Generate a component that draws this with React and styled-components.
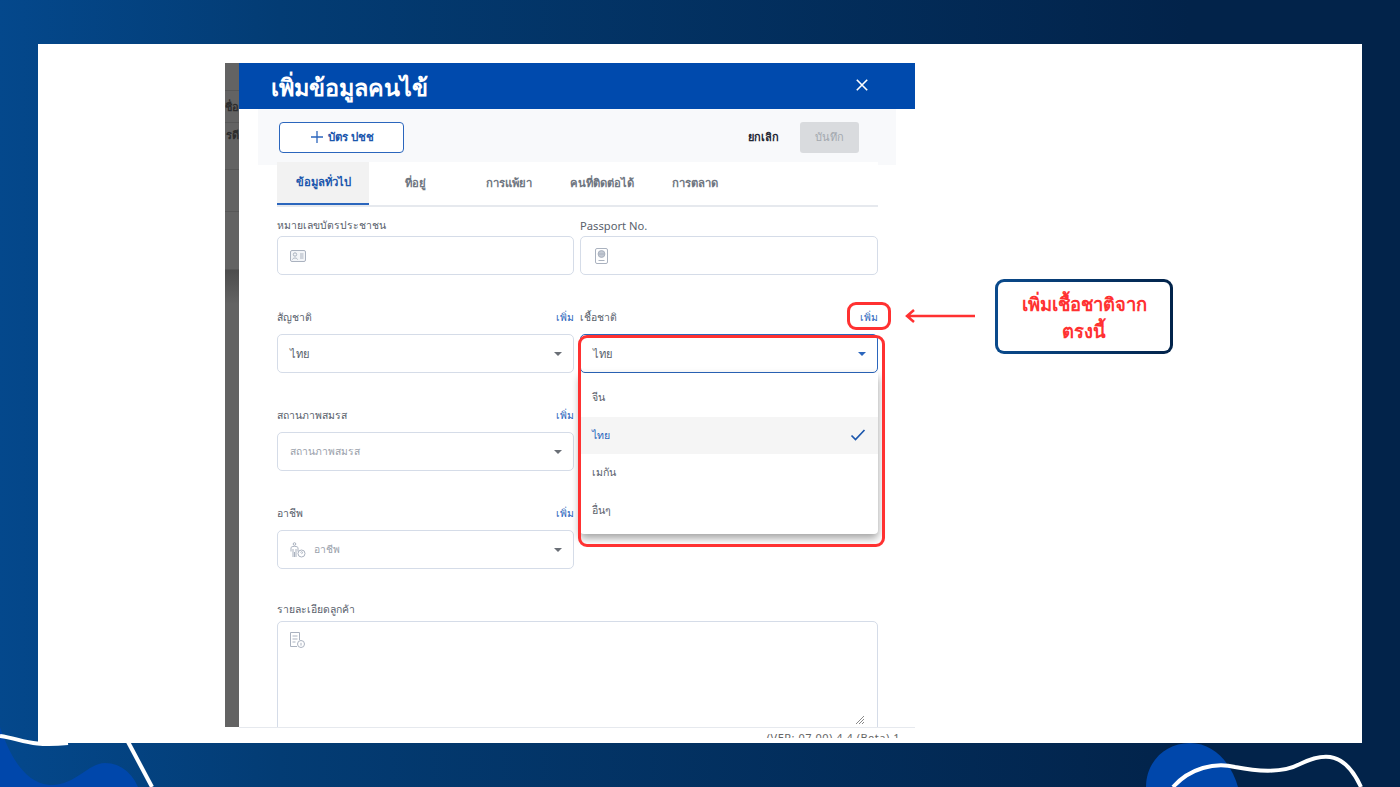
import React from 'react';
import styled, { createGlobalStyle } from 'styled-components';

const font = `"Noto Sans", "Inter", "Liberation Sans", sans-serif`;

const Global = createGlobalStyle`
  html, body {
    margin: 0;
    padding: 0;
    background: #02234a;
  }
  * {
    box-sizing: border-box;
  }
`;

const Page = styled.div`
  position: relative;
  width: 1400px;
  height: 787px;
  padding: 44px 38px;
  overflow: hidden;
  background: linear-gradient(90deg, #04488c 0%, #033c74 20%, #02234a 85%);
  font-family: ${font};
`;

const Decor = styled.svg`
  position: absolute;
  left: 0;
  top: 0;
`;

const Slide = styled.div`
  position: relative;
  height: 699px;
  padding: 19px 0 0 187px;
  background: #fff;
  overflow: hidden;
`;

const Screen = styled.div`
  display: flex;
  width: 690px;
  height: 664px;
`;

const Backdrop = styled.div`
  flex: none;
  width: 14px;
  overflow: hidden;
  background: #636363;
  color: #2c2c2c;
  font-size: 11px;
  font-weight: 600;
`;

const BackdropRow = styled.div`
  height: ${(p) => p.$h}px;
  padding-top: ${(p) => p.$top || 0}px;
  display: flex;
  align-items: ${(p) => (p.$top ? 'flex-start' : 'center')};
  white-space: nowrap;
  border-bottom: 1px solid #575757;
  direction: rtl;
`;

const BackdropBand = styled.div`
  height: 34px;
  background: linear-gradient(180deg, #4c4c4c, #636363);
`;

const Modal = styled.div`
  flex: 1;
  min-width: 0;
  display: flex;
  flex-direction: column;
  background: #fff;
`;

const ModalHeader = styled.header`
  flex: none;
  height: 46px;
  padding: 0 47px 2px 32px;
  display: flex;
  align-items: center;
  justify-content: space-between;
  background: #004aad;
  color: #fff;
`;

const Title = styled.h1`
  margin: 6px 0 0;
  font-size: 23.4px;
  font-weight: 600;
  line-height: 1;
`;

const Toolbar = styled.div`
  flex: none;
  height: 56px;
  margin: 0 19px;
  padding: 0 37px 0 21px;
  display: flex;
  align-items: center;
  gap: 21px;
  background: #f8f9fb;
`;

const CardButton = styled.button`
  width: 125px;
  height: 31px;
  margin-right: auto;
  display: flex;
  align-items: center;
  justify-content: center;
  gap: 4px;
  padding: 0 0 0 1px;
  background: #fff;
  border: 1px solid #2b66bd;
  border-radius: 4px;
  color: #1c57ad;
  font: 600 11.5px ${font};
`;

const CancelButton = styled.span`
  font-size: 11px;
  font-weight: 600;
  color: #1f2733;
`;

const SaveButton = styled.span`
  width: 59px;
  height: 31px;
  display: flex;
  align-items: center;
  justify-content: center;
  background: #d9dbde;
  border-radius: 3px;
  font-size: 11px;
  color: #a3a8ae;
`;

const FormBody = styled.div`
  flex: 1;
  min-height: 0;
  display: flex;
  flex-direction: column;
  margin-top: -3px;
  padding: 0 37px 0 38px;
  overflow: hidden;
`;

const Tabs = styled.nav`
  flex: none;
  height: 45px;
  display: flex;
  background: #fff;
  border-bottom: 2px solid #e6e9ee;
`;

const Tab = styled.div`
  width: ${(p) => p.$w}px;
  height: 43px;
  padding-bottom: 2px;
  display: flex;
  align-items: center;
  justify-content: center;
  font-size: 11.3px;
  font-weight: 600;
  color: ${(p) => (p.$active ? '#1c57ad' : '#6f7681')};
  background: ${(p) => (p.$active ? '#f2f2f2' : 'transparent')};
  border-bottom: ${(p) => (p.$active ? '2px solid #2b66bd' : 'none')};
`;

const FieldGrid = styled.div`
  flex: none;
  display: grid;
  grid-template-columns: 297px 298px;
  column-gap: 6px;
`;

const Field = styled.div`
  position: relative;
  height: ${(p) => p.$h || 98}px;
`;

const LabelRow = styled.div`
  flex: none;
  height: ${(p) => p.$h || 34}px;
  padding-top: ${(p) => p.$top || 0}px;
  display: flex;
  align-items: center;
  justify-content: space-between;
  font-size: ${(p) => (p.$latin ? 11.2 : 10.4)}px;
  color: #59616c;
`;

const AddLink = styled.span`
  color: #2b66bd;
`;

const Input = styled.div`
  height: 39px;
  display: flex;
  align-items: center;
  gap: 8px;
  padding: 0 12px;
  background: #fff;
  border: ${(p) => (p.$focus ? '1.5px solid #2b66bd' : '1px solid #d5dce8')};
  border-radius: 5px;
  font-size: ${(p) => (p.$placeholder ? 10.3 : 11.2)}px;
  color: ${(p) => (p.$placeholder ? '#9aa1ab' : '#59616c')};
`;

const Caret = styled.span`
  margin-left: auto;
  margin-right: -1px;
  width: 0;
  height: 0;
  border-left: 4.5px solid transparent;
  border-right: 4.5px solid transparent;
  border-top: 4.5px solid ${(p) => (p.$focus ? '#2b66bd' : '#6a6f76')};
`;

const Menu = styled.div`
  position: absolute;
  z-index: 2;
  left: 0;
  right: 0;
  top: 73px;
  padding: 6px 0;
  height: 161px;
  background: #fff;
  border-radius: 0 0 4px 4px;
  box-shadow: 0 4px 9px rgba(0, 0, 0, 0.38);
`;

const MenuItem = styled.div`
  height: 37.5px;
  padding: 0 12px;
  display: flex;
  align-items: center;
  justify-content: space-between;
  font-size: 10.6px;
  color: ${(p) => (p.$selected ? '#2b66bd' : '#59616c')};
  background: ${(p) => (p.$selected ? '#f5f5f5' : 'transparent')};
`;

const TextArea = styled.div`
  position: relative;
  flex: none;
  height: 130px;
  padding: 10px 11px;
  border: 1px solid #d5dce8;
  border-radius: 5px;
`;

const ResizeHandle = styled.svg`
  position: absolute;
  right: 13px;
  top: 94px;
`;

const Footer = styled.div`
  width: 676px;
  height: 11px;
  margin-left: 14px;
  padding: 3px 15px 0 0;
  overflow: hidden;
  border-top: 1px solid #e6e9ee;
  text-align: right;
  font-size: 11px;
  letter-spacing: 0.5px;
  line-height: 14px;
  white-space: nowrap;
  color: #666;
`;

const RedBox = styled.div`
  position: absolute;
  left: ${(p) => p.$x}px;
  top: ${(p) => p.$y}px;
  width: ${(p) => p.$w}px;
  height: ${(p) => p.$h}px;
  z-index: 3;
  border: 3px solid #ff3131;
  border-radius: 9px;
  pointer-events: none;
`;

const Callout = styled.div`
  position: absolute;
  left: 995px;
  top: 279px;
  width: 178px;
  height: 75px;
  display: flex;
  align-items: center;
  justify-content: center;
  text-align: center;
  background: linear-gradient(#fff, #fff) padding-box,
    linear-gradient(90deg, #0a4a8c, #02234a) border-box;
  border: 3px solid transparent;
  border-radius: 9px;
  color: #ff3131;
  font-size: 18.4px;
  font-weight: 700;
  line-height: 27px;
`;

const Arrow = styled.svg`
  position: absolute;
  left: 903px;
  top: 306px;
`;

const Glyph = styled.svg`
  flex: none;
  display: block;
`;

const IdCardIcon = () => (
  <Glyph width="16" height="12" viewBox="0 0 16 12" fill="none" stroke="#aab2bf" strokeWidth="1">
    <rect x="0.5" y="0.5" width="15" height="11" rx="1.5" fill="#f3f5f8" />
    <circle cx="5" cy="4.5" r="1.7" />
    <path d="M2.5 9.5c.5-2 4.5-2 5 0M10 4h3.5M10 6h3.5M10 8h3.5" />
  </Glyph>
);

const PassportIcon = () => (
  <Glyph width="15" height="16" viewBox="-2 0 15 16" fill="none" stroke="#aab2bf" strokeWidth="1">
    <rect x="0.5" y="0.5" width="12" height="15" rx="1.5" />
    <circle cx="6.5" cy="6" r="3.4" fill="#c3c9d3" />
    <path d="M3 6h7M3.5 12.5h6" />
  </Glyph>
);

const JobIcon = () => (
  <Glyph width="16" height="16" viewBox="0 0 16 16" fill="none" stroke="#aab2bf" strokeWidth="1">
    <circle cx="4.5" cy="2" r="1.3" />
    <path d="M1 9.5V6c0-1 1-1.6 3.5-1.6S8 5 8 6v3.5M3 15V7M6 15V7M4.5 15v-5" />
    <circle cx="11.5" cy="11.5" r="3.5" />
    <path d="M10.5 10.5c.3-1 2-1 2 0 0 .8-1 .8-1 1.6" />
  </Glyph>
);

const NoteIcon = () => (
  <Glyph width="16" height="16" viewBox="0 0 16 16" fill="none" stroke="#aab2bf" strokeWidth="1">
    <path d="M8 14.5H1.5v-14h9V8" />
    <path d="M3.5 4h5M3.500 7h5M3.500 10h3" />
    <circle cx="12" cy="12" r="3.5" />
    <path d="M12 10.800v2.800" />
  </Glyph>
);

const rows = [
  [{ label: 'สัญชาติ', value: 'ไทย' }, { label: 'เชื้อชาติ', value: 'ไทย', open: true }],
  [{ label: 'สถานภาพสมรส', placeholder: 'สถานภาพสมรส' }],
  [{ label: 'อาชีพ', placeholder: 'อาชีพ', icon: <JobIcon /> }],
];

const options = ['จีน', 'ไทย', 'เมกัน', 'อื่นๆ'];

const SelectField = ({ label, value, placeholder, icon, open }) => (
  <Field>
    <LabelRow>
      {label}
      <AddLink>เพิ่ม</AddLink>
    </LabelRow>
    <Input $focus={open} $placeholder={!!placeholder}>
      {icon}
      {value || placeholder}
      <Caret $focus={open} />
    </Input>
    {open && (
      <Menu>
        {options.map((o) => (
          <MenuItem key={o} $selected={o === value}>
            {o}
            {o === value && (
              <Glyph width="16" height="12" viewBox="0 0 16 12" fill="none" stroke="#1c57ad" strokeWidth="1.7">
                <path d="M1.5 6.5 5.5 10.5 14.500 1" />
              </Glyph>
            )}
          </MenuItem>
        ))}
      </Menu>
    )}
  </Field>
);

export default function App() {
  return (
    <Page>
      <Global />
      <Decor width="1400" height="787" viewBox="0 0 1400 787">
        <path d="M0 727C8 750 22 783 50 785 75 786 88 763 105 763 122 763 133 775 138 787H0Z" fill="#0047ab" />
        <path d="M1146 787C1146 762 1165 743 1190 743 1215 743 1232 765 1238 787Z" fill="#0047ab" />
        <path d="M0 736C22 739 30 747 68 743" stroke="#fff" strokeWidth="4" fill="none" />
        <path d="M127 740 152 787" stroke="#fff" strokeWidth="4" fill="none" />
        <path d="M1173 787C1190 768 1215 762 1235 767 1265 773 1285 772 1300 764 1325 752 1345 752 1361 787" stroke="#fff" strokeWidth="4" fill="none" />
      </Decor>
      <Slide>
        <Screen>
          <Backdrop>
            <BackdropRow $h={28} />
            <BackdropRow $h={32}>ชื่อ</BackdropRow>
            <BackdropRow $h={47} $top={3}>รดี</BackdropRow>
            <BackdropRow $h={42} />
            <BackdropRow $h={58} />
            <BackdropBand />
          </Backdrop>
          <Modal>
            <ModalHeader>
              <Title>เพิ่มข้อมูลคนไข้</Title>
              <Glyph width="12" height="12" viewBox="0 0 12 12" stroke="#fff" strokeWidth="1.6">
                <path d="M.8.8 11.200 11.200M11.200.8.8 11.200" />
              </Glyph>
            </ModalHeader>
            <Toolbar>
              <CardButton>
                <Glyph width="14" height="14" viewBox="0 0 14 14" stroke="#2b66bd" strokeWidth="1.3">
                  <path d="M7 1v12M1 7h12" />
                </Glyph>
                บัตร ปชช
              </CardButton>
              <CancelButton>ยกเลิก</CancelButton>
              <SaveButton>บันทึก</SaveButton>
            </Toolbar>
            <FormBody>
              <Tabs>
                <Tab $w={92} $active>ข้อมูลทั่วไป</Tab>
                <Tab $w={93}>ที่อยู่</Tab>
                <Tab $w={93}>การแพ้ยา</Tab>
                <Tab $w={93}>คนที่ติดต่อได้</Tab>
                <Tab $w={93}>การตลาด</Tab>
              </Tabs>
              <FieldGrid>
                <Field $h={93}>
                  <LabelRow $h={29} $top={7}>หมายเลขบัตรประชาชน</LabelRow>
                  <Input><IdCardIcon /></Input>
                </Field>
                <Field $h={93}>
                  <LabelRow $h={29} $top={7} $latin>Passport No.</LabelRow>
                  <Input><PassportIcon /></Input>
                </Field>
                {rows.map((row) =>
                  row.map((f) => <SelectField key={f.label} {...f} />).concat(
                    row.length === 1 ? [<span key={row[0].label + 'gap'} />] : []
                  )
                )}
              </FieldGrid>
              <LabelRow $h={27} $top={3}>รายละเอียดลูกค้า</LabelRow>
              <TextArea>
                <NoteIcon />
                <ResizeHandle width="8" height="8" viewBox="0 0 8 8" stroke="#8a8a8a" strokeWidth="1">
                  <path d="M0 8 8 0M3 8 8 3M6 8 8 6" />
                </ResizeHandle>
              </TextArea>
            </FormBody>
          </Modal>
        </Screen>
        <Footer>(VER: 07.00) 4.4.(Beta).1</Footer>
      </Slide>
      <RedBox $x={847} $y={302} $w={44} $h={28} />
      <RedBox $x={578} $y={335} $w={307} $h={212} />
      <Arrow width="74" height="20" viewBox="0 0 74 20" fill="none" stroke="#ff3131" strokeWidth="2.5">
        <path d="M72 10H4M11 4 4 10l7 6" />
      </Arrow>
      <Callout>เพิ่มเชื้อชาติจาก<br />ตรงนี้</Callout>
    </Page>
  );
}
